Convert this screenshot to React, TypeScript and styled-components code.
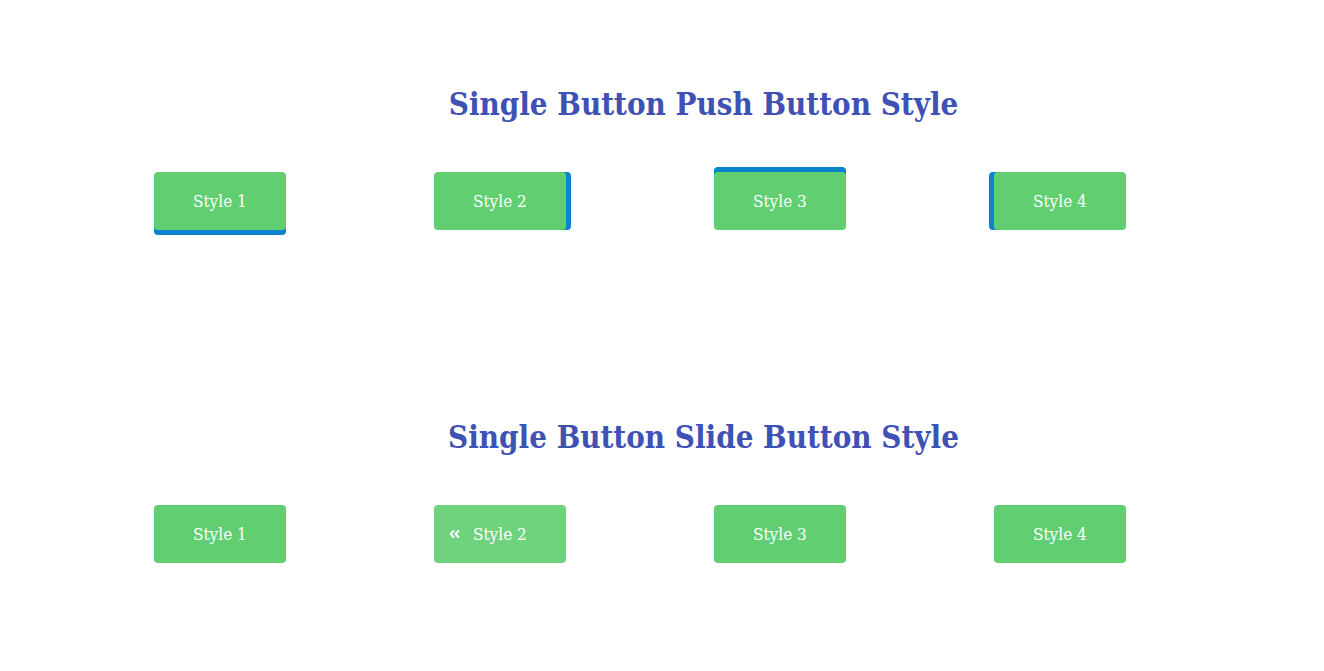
import React from "react";
import styled, { createGlobalStyle } from "styled-components";
import { FaAngleDoubleLeft } from "react-icons/fa";

const Global = createGlobalStyle`
  html, body { margin: 0; padding: 0; background: #ffffff; }
  body { font-family: "DejaVu Serif Condensed", "DejaVu Serif", serif; }
`;

const Page = styled.div`
  display: flex;
  flex-direction: column;
  gap: 185px;
  padding-top: 82px;
`;

const Section = styled.section`
  display: flex;
  flex-direction: column;
`;

const Heading = styled.h2`
  margin: 0 0 0 83px;
  text-align: center;
  font-family: "DejaVu Serif Condensed", "DejaVu Serif", serif;
  font-weight: 700;
  font-size: 31px;
  line-height: 44px;
  color: #3f51b5;
`;

const Row = styled.div`
  display: grid;
  grid-template-columns: repeat(4, 280px);
  margin-left: 154px;
  margin-top: 46px;
`;

type Shadow = "bottom" | "right" | "top" | "left" | "none";

const shadows: Record<Shadow, string> = {
  bottom: "0 5px 0 #0b84d0",
  right: "5px 0 0 #0b84d0",
  top: "0 -5px 0 #0b84d0",
  left: "-5px 0 0 #0b84d0",
  none: "none",
};

const Button = styled.a<{ $shadow: Shadow; $active?: boolean }>`
  position: relative;
  justify-self: start;
  display: inline-flex;
  align-items: center;
  justify-content: center;
  height: 58px;
  padding: 0 39px;
  border-radius: 4px;
  background: ${(p) => (p.$active ? "#6fd37d" : "#61cf71")};
  color: #ffffff;
  font-family: "DejaVu Serif Condensed", "DejaVu Serif", serif;
  font-size: 17px;
  text-decoration: none;
  box-shadow: ${(p) => shadows[p.$shadow]};
`;

const SlideIcon = styled.span`
  position: absolute;
  left: 14px;
  top: 50%;
  transform: translateY(-50%);
  display: flex;
  font-size: 13px;
`;

export default function App() {
  return (
    <Page>
      <Global />
      <Section>
        <Heading>Single Button Push Button Style</Heading>
        <Row>
          <Button $shadow="bottom">Style 1</Button>
          <Button $shadow="right">Style 2</Button>
          <Button $shadow="top">Style 3</Button>
          <Button $shadow="left">Style 4</Button>
        </Row>
      </Section>
      <Section>
        <Heading>Single Button Slide Button Style</Heading>
        <Row>
          <Button $shadow="none">Style 1</Button>
          <Button $shadow="none" $active>
            <SlideIcon>
              <FaAngleDoubleLeft />
            </SlideIcon>
            Style 2
          </Button>
          <Button $shadow="none">Style 3</Button>
          <Button $shadow="none">Style 4</Button>
        </Row>
      </Section>
    </Page>
  );
}
